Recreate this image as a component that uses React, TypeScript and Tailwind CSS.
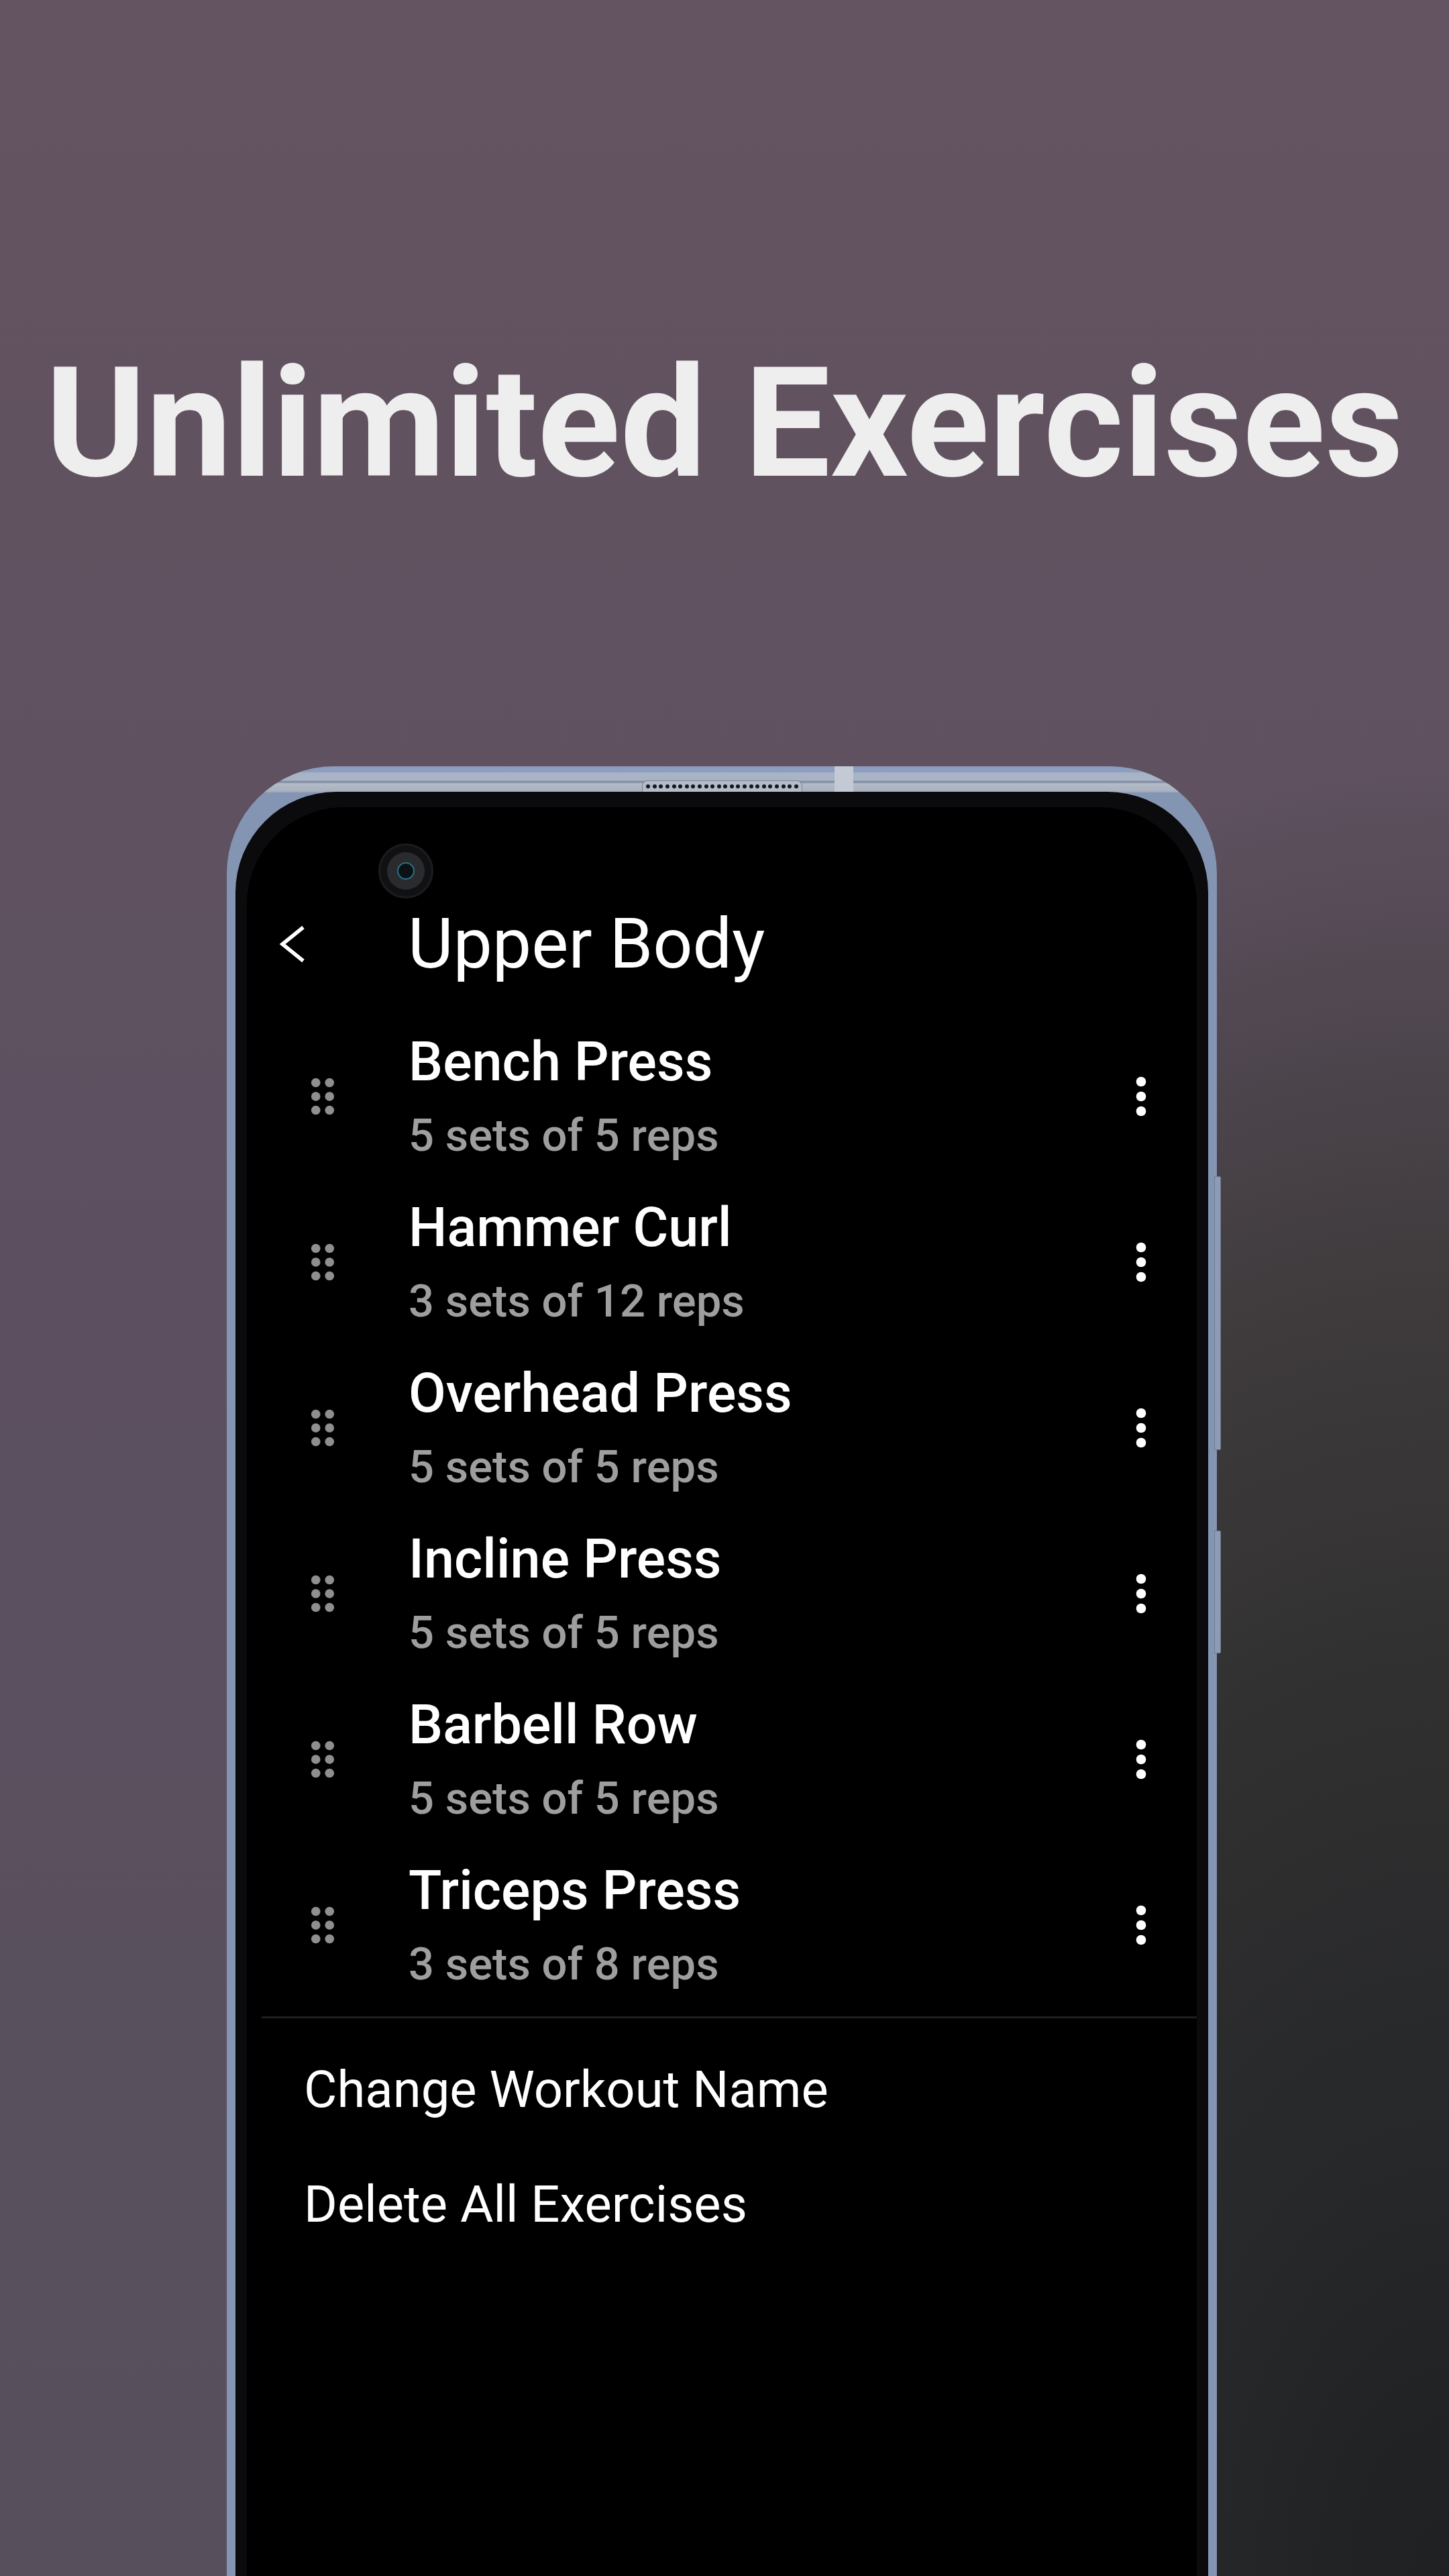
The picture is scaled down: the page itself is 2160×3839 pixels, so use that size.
import React from 'react';

type Exercise = { name: string; detail: string };

const exercises: Exercise[] = [
    { name: 'Bench Press', detail: '5 sets of 5 reps' },
    { name: 'Hammer Curl', detail: '3 sets of 12 reps' },
    { name: 'Overhead Press', detail: '5 sets of 5 reps' },
    { name: 'Incline Press', detail: '5 sets of 5 reps' },
    { name: 'Barbell Row', detail: '5 sets of 5 reps' },
    { name: 'Triceps Press', detail: '3 sets of 8 reps' },
];

function DragHandle() {
    return (
        <svg className="w-[82px] h-[82px] shrink-0" viewBox="0 0 24 24" fill="#8f8f8f">
            <circle cx="9" cy="6" r="2" />
            <circle cx="15" cy="6" r="2" />
            <circle cx="9" cy="12" r="2" />
            <circle cx="15" cy="12" r="2" />
            <circle cx="9" cy="18" r="2" />
            <circle cx="15" cy="18" r="2" />
        </svg>
    );
}

function MoreVert() {
    return (
        <svg className="w-[88px] h-[88px] shrink-0" viewBox="0 0 24 24" fill="#ffffff">
            <circle cx="12" cy="6" r="2" />
            <circle cx="12" cy="12" r="2" />
            <circle cx="12" cy="18" r="2" />
        </svg>
    );
}

function ExerciseRow({ exercise }: { exercise: Exercise }) {
    return (
        <div className="flex h-[247px] items-center pl-[72px] pr-[39px]">
            <DragHandle />
            <div className="ml-[87px] flex-1">
                {/* title + sets line */}
                <div className="text-[81px] leading-[96px] font-medium text-white">{exercise.name}</div>
                <div className="mt-[21px] text-[67px] leading-[80px] font-medium text-[#9e9e9e]">{exercise.detail}</div>
            </div>
            <MoreVert />
        </div>
    );
}

export default function App() {
    return (
        <div className="w-[2160px] h-[3839px] overflow-hidden font-['Roboto','Liberation_Sans',sans-serif] bg-[radial-gradient(1700px_2700px_at_100%_100%,#1e2022_0%,#2f2f30_47%,#3f3b3c_71%,rgba(94,80,85,0)_100%),linear-gradient(180deg,#645360_0%,#5c5060_50%,#57505c_100%)]">
            <h1 className="pt-[517px] text-center text-[228px] leading-none font-bold text-[#eeeeee]">
                Unlimited Exercises
            </h1>

            {/* phone body */}
            <div className="relative mt-[397px] ml-[338px] w-[1476px] h-[2740px] rounded-t-[160px] px-[13px] pt-[38px] bg-[linear-gradient(180deg,#8d9dbf_0px,#8d9dbf_8px,#a9b3c6_10px,#a9b3c6_21px,#75829b_23px,#b3bbc8_26px,#aab2c0_37px,#8494b3_40px,#8494b3_100%)]">
                {/* speaker grille */}
                <div className="absolute left-[619px] top-[21px] flex h-[17px] w-[239px] items-center justify-center gap-[3.6px] rounded-t-[8px] border border-b-0 border-[#7a8496] bg-[#b4bcc9]">
                    {Array.from({ length: 24 }).map((_, i) => (
                        <span key={i} className="h-[6px] w-[6px] rounded-full bg-[#15171c]" />
                    ))}
                </div>
                {/* antenna line */}
                <div className="absolute left-[906px] top-0 h-[38px] w-[28px] bg-[#c3cad6]" />
                {/* side buttons */}
                <div className="absolute right-[-6px] top-[611px] h-[408px] w-[10px] rounded-r-[2px] border border-[#6f7b93] bg-[#8e9bb5]" />
                <div className="absolute right-[-6px] top-[1139px] h-[183px] w-[10px] rounded-r-[2px] border border-[#6f7b93] bg-[#8e9bb5]" />

                <div className="h-full rounded-t-[150px] bg-[#0b0b0d] px-[17px] pt-[23px]">
                    <div className="relative h-full rounded-t-[145px] bg-black">
                        {/* camera hole */}
                        <div className="absolute left-[196px] top-[54px] flex h-[82px] w-[82px] items-center justify-center rounded-full border-[3px] border-[#1c1c20] bg-[#111114]">
                            <div className="flex h-[56px] w-[56px] items-center justify-center rounded-full bg-[#2a2b2f]">
                                <div className="h-[26px] w-[26px] rounded-full border-[2px] border-[#2b6f86] bg-[#0b1216]" />
                            </div>
                        </div>

                        <div className="pt-[129px]">
                            {/* header */}
                            <div className="flex h-[150px] items-center pl-[48px]">
                                <svg className="w-[40px] h-[56px] shrink-0" viewBox="0 0 40 56" fill="none">
                                    <polyline points="36,3 5,28 36,53" stroke="#ffffff" strokeWidth="5.5" />
                                </svg>
                                <div className="ml-[152px] text-[104px] leading-none text-white">Upper Body</div>
                            </div>

                            <div className="mt-[28px]">
                                {exercises.map((ex) => (
                                    <ExerciseRow key={ex.name} exercise={ex} />
                                ))}
                            </div>

                            <div className="mt-[13px] ml-[22px] h-[3px] bg-[#1f1f1f]" />

                            <div className="mt-[21px] pl-[85px] text-[76px] leading-[171px] text-white">
                                <div>Change Workout Name</div>
                                <div>Delete All Exercises</div>
                            </div>
                        </div>
                    </div>
                </div>
            </div>
        </div>
    );
}
